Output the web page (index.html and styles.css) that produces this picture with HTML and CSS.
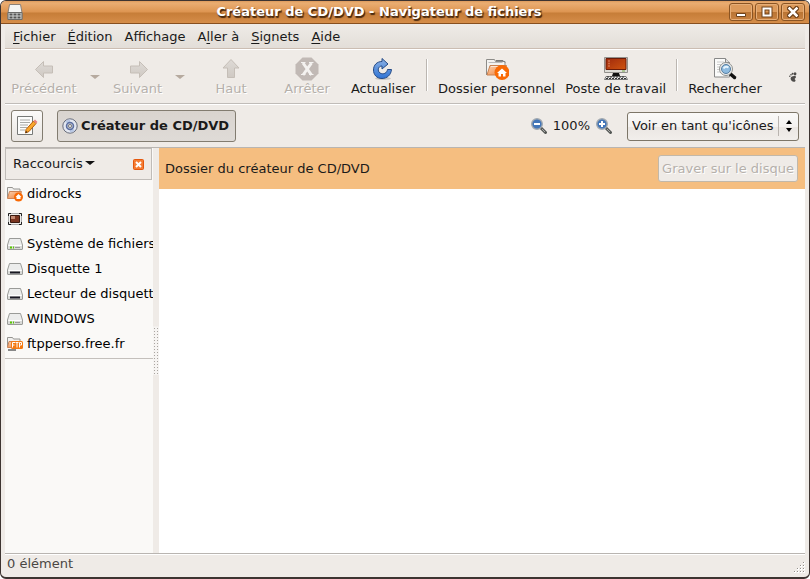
FILE: index.html
```html
<!DOCTYPE html>
<html lang="fr">
<head>
<meta charset="utf-8">
<title>Créateur de CD/DVD - Navigateur de fichiers</title>
<link rel="stylesheet" href="styles.css">
</head>
<body>
<svg class="defs" aria-hidden="true">
  <defs>
    <linearGradient id="gray" x1="0" y1="0" x2="0" y2="1"><stop offset="0" stop-color="#fdfdfc"/><stop offset="1" stop-color="#c6c7c4"/></linearGradient>
    <linearGradient id="orange" x1="0" y1="0" x2="1" y2="1"><stop offset="0" stop-color="#fbd2b0"/><stop offset="1" stop-color="#ee7d35"/></linearGradient>
    <linearGradient id="blue" x1="0" y1="0" x2="0" y2="1"><stop offset="0" stop-color="#8eb2e3"/><stop offset="1" stop-color="#2f74d6"/></linearGradient>
    <linearGradient id="red" x1="0" y1="0" x2="1" y2="1"><stop offset="0" stop-color="#a02a0c"/><stop offset="1" stop-color="#cf5410"/></linearGradient>
    <linearGradient id="arrow" x1="0" y1="0" x2="0" y2="1"><stop offset="0" stop-color="#dedad6"/><stop offset="1" stop-color="#cfc9c3"/></linearGradient>
    <symbol id="drive" viewBox="0 0 16 16">
      <path d="M2.500 2.500h11l2 6.500v4q0 .5-.5.500h-14q-.5 0-.5-.5V9z" fill="#ecedec" stroke="#9a9b98"/>
      <path d="M1.500 9.500h13" stroke="#fff"/>
      <path d="M1 10h14v3H1z" fill="#d9dad7"/>
    </symbol>
    <symbol id="folder" viewBox="0 0 24 24">
      <path d="M1.500 18V2.500h8l1 2h9.500v12" fill="#f4f3f1" stroke="#8d8c89"/>
      <path d="M11 3.500h7l2 2" fill="none" stroke="#777"/>
      <path d="M3.500 5.500h14" stroke="#bbb"/>
      <path d="M5 8.500h16.500l-2 9.500H2z" fill="url(#orange)" stroke="#c98150"/>
      <path d="M6 9.500h14" stroke="#fff" stroke-opacity=".6"/>
    </symbol>
    <symbol id="home" viewBox="0 0 24 24">
      <use href="#folder" width="24" height="24"/>
      <circle cx="17" cy="15.500" r="7.500" fill="#f96a05"/>
      <path d="M17 11.500l5 4.500h-1.500v3.500h-2.500v-2.500h-2v2.500h-2.500V16H12z" fill="#fff"/>
    </symbol>
    <symbol id="home-small" viewBox="0 0 16 16">
      <path d="M.5 12V1.500h5l1 1.500h6.500v5" fill="#f2f1ef" stroke="#969591"/>
      <path d="M2.500 5.500h12l-2 7H.5z" fill="url(#orange)" stroke="#cf8455"/>
      <circle cx="11.500" cy="11" r="4.500" fill="#f96a05"/>
      <path d="M11.500 8l3 3h-1v2h-4v-2h-1z" fill="#fff"/>
    </symbol>
  </defs>
</svg>

<main class="window">
  <header class="titlebar">
    <svg class="app-icon" viewBox="0 0 16 16" width="16" height="16" aria-hidden="true">
      <path d="M2.500.5h11l1.500 8v7H1v-7z" fill="#f4f5f4" stroke="#8b8178"/>
      <path d="M1 8.500h14v7H1z" fill="#cfd2d0" stroke="#6c6c6a"/>
      <path d="M2.500 10.500h11M2.500 13.500h11" stroke="#555" stroke-width="2" stroke-dasharray="3 1"/>
    </svg>
    <h1>Créateur de CD/DVD - Navigateur de fichiers</h1>
    <div class="controls">
      <button type="button" aria-label="Réduire"><svg viewBox="0 0 12 12" width="12" height="12"><path d="M1.500 7.500h9v3h-9z" fill="#fff" stroke="#6e421b"/></svg></button>
      <button type="button" aria-label="Agrandir"><svg viewBox="0 0 12 12" width="12" height="12"><path d="M2.500 2.500h7v7h-7z" fill="none" stroke="#6e421b" stroke-width="4"/><path d="M2.500 2.500h7v7h-7z" fill="none" stroke="#fff" stroke-width="2"/></svg></button>
      <button type="button" aria-label="Fermer"><svg viewBox="0 0 12 12" width="12" height="12"><path d="M2.500 2.500l7 7M9.500 2.500l-7 7" stroke="#6e421b" stroke-width="5" stroke-linecap="square"/><path d="M2.500 2.500l7 7M9.500 2.500l-7 7" stroke="#fff" stroke-width="2.500" stroke-linecap="square"/></svg></button>
    </div>
  </header>

  <div class="content">
    <nav class="menubar">
      <button type="button"><u>F</u>ichier</button>
      <button type="button"><u>É</u>dition</button>
      <button type="button">Affichage</button>
      <button type="button">A<u>l</u>ler à</button>
      <button type="button"><u>S</u>ignets</button>
      <button type="button"><u>A</u>ide</button>
    </nav>

    <div class="toolbar">
      <button type="button" class="tool wide" disabled>
        <svg viewBox="0 0 24 24" width="24" height="24"><path d="M3.500 12.500l8-8v4.500h9v7h-9v4.500z" fill="url(#arrow)" stroke="#c5beb7"/></svg>
        <span>Précédent</span>
      </button>
      <button type="button" class="drop" disabled aria-label="Historique précédent"><i class="caret"></i></button>
      <button type="button" class="tool" disabled>
        <svg viewBox="0 0 24 24" width="24" height="24"><path d="M21.500 12.500l-8-8v4.500h-9v7h9v4.500z" fill="url(#arrow)" stroke="#c5beb7"/></svg>
        <span>Suivant</span>
      </button>
      <button type="button" class="drop" disabled aria-label="Historique suivant"><i class="caret"></i></button>
      <button type="button" class="tool wide" disabled>
        <svg viewBox="0 0 24 24" width="24" height="24"><path d="M12 2.500l8 8.500h-4.500v9.500h-7V11H4z" fill="url(#arrow)" stroke="#c5beb7"/></svg>
        <span>Haut</span>
      </button>
      <button type="button" class="tool wide" disabled>
        <svg viewBox="0 0 24 24" width="24" height="24"><path d="M7.500.5h9l7 7v9l-7 7h-9l-7-7v-9z" fill="#c1b9b5"/><path d="M8 6l8.500 12M16.500 6L8 18" stroke="#f4f2f0" stroke-width="3"/><path d="M6 5.500h4.500M14 5.500h4.500M6 17.500h4.500M14 17.500h4.500" stroke="#f4f2f0"/></svg>
        <span>Arrêter</span>
      </button>
      <button type="button" class="tool wide">
        <svg viewBox="0 0 24 24" width="24" height="24"><ellipse cx="12" cy="21.500" rx="8" ry="1.500" fill="#c9c6c2"/><path d="M11 1.500l6 5.500-6 5V9c-4 0-5 5-2 7 3.500 2 7 0 7.500-3.500h4C20 18 16 21.500 11 21.500c-5.500 0-8.500-4-8.500-8.500C2.500 8 6 4.500 11 4.500z" fill="url(#blue)" stroke="#254a85"/></svg>
        <span>Actualiser</span>
      </button>
      <i class="sep"></i>
      <button type="button" class="tool">
        <svg viewBox="0 0 24 24" width="24" height="24"><use href="#home" width="24" height="24"/></svg>
        <span>Dossier personnel</span>
      </button>
      <button type="button" class="tool">
        <svg viewBox="0 0 24 24" width="24" height="24"><path d="M.5.500h23v15H.5z" fill="#dfded9" stroke="#92918d"/><path d="M2 1.500h20v11H2z" fill="url(#red)" stroke="#6b1b08"/><path d="M4.500 4h1M4.500 6.500h1M4.500 9h1" stroke="#f0a080" stroke-width="1.500"/><path d="M18 14h3" stroke="#77a84c"/><path d="M9 16h6l1 3H8z" fill="#111"/><path d="M2 19.500h20l1.500 3H.5z" fill="#eee" stroke="#777"/><path d="M3 20h18M2 21.500h20" stroke="#333" stroke-dasharray="2 1"/></svg>
        <span>Poste de travail</span>
      </button>
      <i class="sep"></i>
      <button type="button" class="tool">
        <svg viewBox="0 0 24 24" width="24" height="24"><path d="M1.500 1.500h11l4 4v14.500h-15z" fill="#fbfbfa" stroke="#888"/><path d="M4 5h7M4 7.500h4M4 10h3M4 12.500h3M4 15h4" stroke="#ccc"/><path d="M12.500 1.500v4h4" fill="#ddd" stroke="#888"/><path d="M17.500 17l4 3.500" stroke="#111" stroke-width="3.500" stroke-linecap="round"/><circle cx="13" cy="12" r="6.500" fill="#eee" stroke="#8f918e"/><circle cx="13" cy="12" r="4.500" fill="#8ebbe0" stroke="#587e9f"/><path d="M10.500 11.500q2-3 5-1" stroke="#e7f4fd" stroke-width="2" fill="none"/></svg>
        <span>Rechercher</span>
      </button>
      <svg class="foot" viewBox="0 0 10 12" width="8" height="10" aria-hidden="true"><g fill="#4d4b49"><ellipse cx="7.500" cy="2" rx="1.800" ry="2"/><circle cx="4.500" cy="2" r="1.200"/><circle cx="2.500" cy="3.200" r="1"/><circle cx="1" cy="5" r=".9"/><path d="M8.500 5C5 4 2 5.500 2 8c0 2 2 4 4 4s3-2 1.500-3C6 8 9.500 7.500 8.500 5z"/></g></svg>
    </div>

    <div class="location">
      <button type="button" class="edit" aria-label="Saisir l'emplacement">
        <svg viewBox="0 0 24 24" width="24" height="24"><path d="M2.500 2.500h15v18h-15z" fill="#fcfcfb" stroke="#777977"/><path d="M5 6h10M5 8.500h10M5 11h8M5 13.500h7M5 16h5" stroke="#a9aaa7"/><path d="M18.500 7l2.500 2.500-7 8-3.500 1.500.5-3.500z" fill="#f9a72c" stroke="#b75e09"/><path d="M18.500 7L20 5.500 22.500 8 21 9.500z" fill="#e9807c"/><path d="M10.500 19l.5-2 1.500 1.200z" fill="#222"/></svg>
      </button>
      <button type="button" class="crumb" aria-pressed="true">
        <svg viewBox="0 0 16 16" width="16" height="16"><circle cx="8" cy="8" r="7.200" fill="#e3e7f1" stroke="#686d7b"/><path d="M8 8L3 3.500A7 7 0 0 1 8 1.500zM8 8l5 4.500A7 7 0 0 1 8 14.500z" fill="#b9c8e4"/><circle cx="8" cy="8" r="3.500" fill="#b9bfd0" stroke="#5c6fa0" stroke-width="1.500"/><circle cx="8" cy="8" r="1.500" fill="#fff" stroke="#777"/></svg>
        <span>Créateur de CD/DVD</span>
      </button>
      <div class="zoom">
        <button type="button" class="flat" aria-label="Zoom arrière">
          <svg viewBox="0 0 16 16" width="16" height="16"><path d="M10 10l4.500 4.500" stroke="#555855" stroke-width="3" stroke-linecap="round"/><path d="M11 11l3 3" stroke="#aaa"/><circle cx="6" cy="6" r="5.300" fill="#4376b8" stroke="#a2a9b0" stroke-width="1.400"/><path d="M3 6h6" stroke="#fff" stroke-width="2"/></svg>
        </button>
        <span>100%</span>
        <button type="button" class="flat" aria-label="Zoom avant">
          <svg viewBox="0 0 16 16" width="16" height="16"><path d="M10 10l4.500 4.500" stroke="#555855" stroke-width="3" stroke-linecap="round"/><path d="M11 11l3 3" stroke="#aaa"/><circle cx="6" cy="6" r="5.300" fill="#4376b8" stroke="#a2a9b0" stroke-width="1.400"/><path d="M3 6h6M6 3v6" stroke="#fff" stroke-width="2"/></svg>
        </button>
      </div>
      <div class="view">
        <select aria-label="Mode d'affichage"><option>Voir en tant qu'icônes</option></select>
        <svg class="spin" viewBox="0 0 8 14" width="8" height="14" aria-hidden="true"><path d="M4 1l3 4H1zM4 13l3-4H1z" fill="#000"/></svg>
      </div>
    </div>

    <div class="body">
      <aside class="side">
        <div class="side-head">
          <button type="button" class="flat heading">Raccourcis<i class="caret dark"></i></button>
          <button type="button" class="flat" aria-label="Fermer le panneau">
            <svg viewBox="0 0 11 11" width="11" height="11"><rect x=".5" y=".5" width="10" height="10" rx="1" fill="#f57c33" stroke="#e4570d"/><path d="M3 3l5 5M8 3L3 8" stroke="#fff" stroke-width="2"/></svg>
          </button>
        </div>
        <ul class="places">
          <li><svg viewBox="0 0 16 16" width="16" height="16"><use href="#home-small" width="16" height="16"/></svg><span>didrocks</span></li>
          <li><svg viewBox="0 0 16 16" width="16" height="16"><path d="M1.500 2.500h13v11h-13z" fill="#efeeec" stroke="#aaa"/><path d="M3.500 4.500h9v7h-9z" fill="#7b3520" stroke="#3b1b10"/><path d="M4 5h4v3H4z" fill="#c48a72"/><path d="M1.500 5V2.500H4M12 2.500h2.500V5M14.500 11v2.500H12M4 13.500H1.500V11" fill="none" stroke="#222"/></svg><span>Bureau</span></li>
          <li><svg viewBox="0 0 16 16" width="16" height="16"><use href="#drive" width="16" height="16"/><path d="M3 11.500h4" stroke="#58c800" stroke-width="2" stroke-dasharray="2 1"/><path d="M8 11.500h5" stroke="#999"/></svg><span>Système de fichiers</span></li>
          <li><svg viewBox="0 0 16 16" width="16" height="16"><use href="#drive" width="16" height="16"/><path d="M3 11.500h10" stroke="#181822" stroke-width="2"/></svg><span>Disquette 1</span></li>
          <li><svg viewBox="0 0 16 16" width="16" height="16"><use href="#drive" width="16" height="16"/><path d="M3 11.500h10" stroke="#181822" stroke-width="2"/></svg><span>Lecteur de disquettes</span></li>
          <li><svg viewBox="0 0 16 16" width="16" height="16"><use href="#drive" width="16" height="16"/><path d="M3 11.500h4" stroke="#58c800" stroke-width="2" stroke-dasharray="2 1"/><path d="M8 11.500h5" stroke="#999"/></svg><span>WINDOWS</span></li>
          <li><svg viewBox="0 0 16 16" width="16" height="16"><path d="M.5 11V1.500h5l1 1.500h6.500v3" fill="#f2f1ef" stroke="#969591"/><path d="M2 5.500h11v6H.5z" fill="url(#orange)" stroke="#cf8455"/><path d="M1 14h8" stroke="#888" stroke-width="2"/><rect x="4" y="5" width="12" height="8" rx="1.500" fill="#f57a12"/><path d="M5.500 11.500v-5H8M5.500 9h2M8.500 6.500h3M10 6.500v5M12.500 11.500v-5h2v2.500h-2" fill="none" stroke="#fff"/></svg><span>ftpperso.free.fr</span></li>
        </ul>
      </aside>
      <div class="splitter"></div>
      <section class="main">
        <div class="banner">
          <span>Dossier du créateur de CD/DVD</span>
          <button type="button" class="burn" disabled>Graver sur le disque</button>
        </div>
      </section>
    </div>

    <footer class="status">
      <span>0 élément</span>
      <svg viewBox="0 0 12 12" width="12" height="12" aria-hidden="true"><g fill="#fff"><path d="M10 1h2v2h-2zM7 4h2v2H7zM10 4h2v2h-2zM4 7h2v2H4zM7 7h2v2H7zM10 7h2v2h-2zM1 10h2v2H1zM4 10h2v2H4zM7 10h2v2H7zM10 10h2v2h-2z"/></g><path d="M10 1h1v1h-1zM7 4h1v1H7zM10 4h1v1h-1zM4 7h1v1H4zM7 7h1v1H7zM10 7h1v1h-1zM1 10h1v1H1zM4 10h1v1H4zM7 10h1v1H7zM10 10h1v1h-1z" fill="#928e89"/></svg>
    </footer>
  </div>
</main>
</body>
</html>
```
FILE: styles.css
```css
* { box-sizing: border-box; }

html, body { height: 100%; }

body {
  margin: 0;
  background: #fff;
  color: #1a1a1a;
  font: 13px/16px "DejaVu Sans", sans-serif;
}

button, select { font: inherit; color: inherit; }

button {
  padding: 0;
  border: 0;
  background: none;
  white-space: nowrap;
}

svg { display: block; flex: none; }

.defs { position: absolute; width: 0; height: 0; }

.window {
  display: flex;
  flex-direction: column;
  height: 100vh;
  border: 1px solid #3d3431;
  border-bottom-width: 2px;
  border-radius: 6px;
  background: #efebe7;
  overflow: hidden;
}

.titlebar {
  display: flex;
  align-items: center;
  height: 23px;
  padding: 0 4px 0 6px;
  border-bottom: 1px solid #874f1f;
  background: linear-gradient(#dd9a5c 0, #eaad72 2px, #dd9551 11px, #c67d38 12px, #d58d49 100%);
}

.titlebar h1 {
  flex: 1;
  margin: 0;
  padding-left: 6px;
  font-size: 13px;
  line-height: 16px;
  text-align: center;
  color: #fff;
  text-shadow: 1px 1px 1px #4a2a10, 1px 2px 1px #4a2a10;
}

.controls { display: flex; gap: 2px; }

.controls button {
  display: grid;
  place-items: center;
  width: 24px;
  height: 18px;
  border: 1px solid #8a5423;
  border-radius: 3px;
  background: linear-gradient(#dc9a5b 50%, #b97433 50%, #c98241);
  box-shadow: inset 0 0 0 1px #e6ae78;
}

.content {
  display: flex;
  flex: 1;
  flex-direction: column;
  min-height: 0;
  margin: 0 4px;
}

.menubar {
  display: flex;
  gap: 12px;
  height: 25px;
  padding: 2px 8px 0;
  border-bottom: 1px solid #cbbdb2;
  background: linear-gradient(#efebe7, #e3ded8);
}

.menubar u { text-decoration-thickness: 1px; text-underline-offset: 2px; }

.toolbar {
  display: flex;
  height: 55px;
  padding: 7px 8px 0 1px;
  border-top: 1px solid #fff;
  border-bottom: 1px solid #c0bcb8;
}

.tool {
  display: flex;
  flex-direction: column;
  align-items: center;
  padding: 0 5px;
}

.tool.wide { min-width: 76px; }

.tool:disabled, .burn:disabled {
  color: #b5b0ab;
  text-shadow: 1px 1px #fff;
}

.drop {
  width: 26px;
  height: 36px;
}

.caret {
  display: inline-block;
  border: solid transparent;
  border-width: 4px 5px 0;
  border-top-color: #b6aa9f;
}

.caret.dark {
  margin-left: 2px;
  border-top-color: #111;
  vertical-align: 3px;
}

.sep {
  width: 2px;
  height: 32px;
  margin: 2px 5px 0;
  border-left: 1px solid #bbb6b1;
  border-right: 1px solid #fff;
}

.foot { margin: 15px 0 0 auto; }

.location {
  display: flex;
  align-items: center;
  height: 44px;
  padding: 0 6px;
  border-top: 1px solid #fff;
  border-bottom: 1px solid #b9b5b1;
}

.edit, .crumb {
  display: flex;
  align-items: center;
  justify-content: center;
  height: 32px;
  border: 1px solid #827c70;
  border-radius: 3px;
}

.edit {
  width: 32px;
  background: linear-gradient(#fbfaf9, #e9e5e1);
}

.crumb {
  gap: 3px;
  margin-left: 14px;
  padding: 0 6px 0 4px;
  background: linear-gradient(#d9d4cf, #dfdbd7);
  font-weight: bold;
}

.zoom {
  display: flex;
  align-items: center;
  gap: 6px;
  margin-left: auto;
}

.view {
  position: relative;
  margin-left: 15px;
}

.view select {
  display: block;
  width: 172px;
  height: 29px;
  padding: 0 24px 0 4px;
  border: 1px solid #7d7668;
  border-radius: 3px;
  appearance: none;
  background: linear-gradient(#b9b4af, #b9b4af) right 19px center / 1px 20px no-repeat,
    linear-gradient(#faf9f8, #f4f2f0 50%, #ebe7e3 52%, #f1eeeb);
}

.spin {
  position: absolute;
  top: 7px;
  right: 6px;
  pointer-events: none;
}

.body {
  display: flex;
  flex: 1;
  min-height: 0;
}

.side {
  display: flex;
  flex-direction: column;
  width: 148px;
  background: #faf9f7;
  overflow: hidden;
}

.side-head {
  display: flex;
  align-items: center;
  justify-content: space-between;
  height: 32px;
  margin-right: 1px;
  padding: 0 7px;
  border: 1px solid #c0bcb8;
  background: #efebe7;
}

.places {
  margin: 0;
  padding: 1px 0 2px;
  border-bottom: 1px solid #c4c0bc;
  list-style: none;
}

.places li {
  display: flex;
  align-items: center;
  gap: 4px;
  height: 25px;
  padding-left: 2px;
  white-space: nowrap;
  color: #000;
}

.splitter {
  width: 6px;
  background:
    linear-gradient(#efebe7, #efebe7) top / 100% calc(50% - 24px) no-repeat,
    linear-gradient(#efebe7, #efebe7) bottom / 100% calc(50% - 24px) no-repeat,
    conic-gradient(from 270deg at 1px 1px, #a9a5a0 25%, #f6f4f2 0) 1px 0 / 3px 3px;
}

.main { flex: 1; min-width: 0; background: #fff; }

.banner {
  display: flex;
  align-items: center;
  justify-content: space-between;
  height: 41px;
  padding: 0 7px 0 6px;
  background: #f5be80;
}

.burn {
  height: 27px;
  padding: 0 3px;
  border: 1px solid #c2b8a9;
  border-radius: 3px;
  background: #efebe7;
}

.status {
  display: flex;
  justify-content: space-between;
  align-items: center;
  height: 24px;
  padding: 0 0 4px 2px;
  border-top: 1px solid #b9b5b1;
  box-shadow: inset 0 1px #fff;
  color: #4a4744;
}

.status svg { align-self: flex-end; }
```
